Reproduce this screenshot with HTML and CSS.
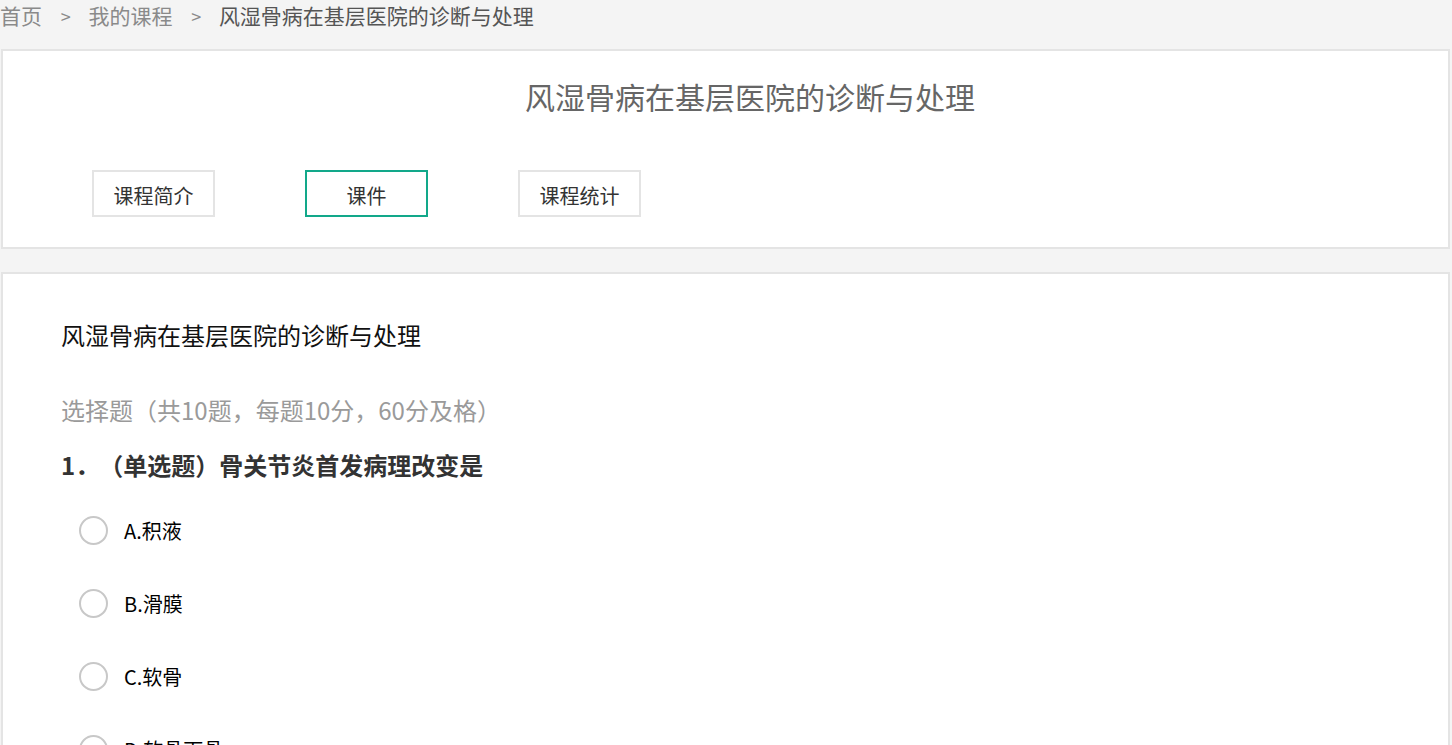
FILE: index.html
```html
<!DOCTYPE html>
<html lang="zh-CN">
<head>
    <meta charset="UTF-8">
    <meta name="viewport" content="width=device-width, initial-scale=1.0">
    <title>风湿骨病在基层医院的诊断与处理</title>
    <link rel="stylesheet" href="styles.css">
</head>
<body>
    <div class="crumbs">
        <a href="#">首页</a>
        <span class="sep">&gt;</span>
        <a href="#">我的课程</a>
        <span class="sep">&gt;</span>
        <span class="current">风湿骨病在基层医院的诊断与处理</span>
    </div>

    <div class="card head-card">
        <h1 class="course-title">风湿骨病在基层医院的诊断与处理</h1>
        <div class="tabs">
            <button class="tab">课程简介</button>
            <button class="tab active">课件</button>
            <button class="tab">课程统计</button>
        </div>
    </div>

    <div class="card exam-card">
        <h2 class="exam-title">风湿骨病在基层医院的诊断与处理</h2>
        <p class="exam-info">选择题（共10题，每题10分，60分及格）</p>
        <p class="question">1．（单选题）骨关节炎首发病理改变是</p>
        <ul class="options">
            <li><span class="radio"></span>A.积液</li>
            <li><span class="radio"></span>B.滑膜</li>
            <li><span class="radio"></span>C.软骨</li>
            <li><span class="radio"></span>D.软骨下骨</li>
        </ul>
    </div>
</body>
</html>
```

FILE: styles.css
```css
body {
    margin: 0;
    padding: 0;
    background-color: #f4f4f4;
    font-family: "Noto Sans CJK SC", "Open Sans", sans-serif;
    color: #333;
    overflow: hidden;
    text-spacing-trim: space-all;
}

.crumbs {
    height: 49px;
    line-height: 30px;
    font-size: 21px;
    color: #8a8a8a;
    white-space: nowrap;
}

.crumbs a {
    color: #8a8a8a;
    text-decoration: none;
}

.crumbs .sep {
    margin: 0 13px 0 14px;
    font-size: 18px;
}

.crumbs .current {
    color: #555;
}

.card {
    margin-left: 1px;
    width: 1449px;
    background-color: #fff;
    border: 2px solid #e4e4e4;
    box-sizing: border-box;
}

.head-card {
    height: 200px;
    padding-top: 25px;
}

.course-title {
    margin: 0;
    padding-left: 49px;
    text-align: center;
    font-size: 30px;
    font-weight: normal;
    line-height: 40px;
    color: #666;
}

.tabs {
    display: flex;
    gap: 90px;
    margin-top: 54px;
    padding-left: 89px;
}

.tab {
    width: 123px;
    height: 47px;
    padding: 3px 0 0;
    border: 2px solid #e4e4e4;
    background-color: #fff;
    font-family: inherit;
    font-size: 20px;
    color: #333;
    cursor: pointer;
}

.tab.active {
    border-color: #12a88a;
}

.exam-card {
    margin-top: 23px;
    height: 480px;
    padding: 44px 58px 0;
}

.exam-title {
    margin: 0;
    font-size: 24px;
    font-weight: normal;
    line-height: 34px;
    color: #111;
}

.exam-info {
    margin: 41px 0 0;
    font-size: 24px;
    line-height: 34px;
    color: #9a9a9a;
}

.question {
    margin: 21px 0 0;
    font-size: 24px;
    font-weight: bold;
    line-height: 34px;
    color: #333;
}

.options {
    list-style: none;
    margin: 28px 0 0;
    padding: 0 0 0 18px;
}

.options li {
    display: flex;
    align-items: center;
    height: 40px;
    margin-bottom: 33px;
    font-size: 20px;
    color: #000;
}

.radio {
    width: 25px;
    height: 25px;
    margin-right: 16px;
    border: 2px solid #c8c8c8;
    border-radius: 50%;
    flex-shrink: 0;
}
```
